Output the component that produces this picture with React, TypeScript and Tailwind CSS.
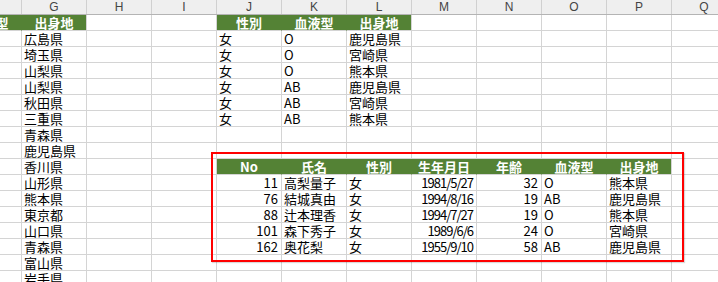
type Cell = { v?: string; h?: boolean; n?: boolean; d?: boolean };

const COLS = ["F", "G", "H", "I", "J", "K", "L", "M", "N", "O", "P", "Q"];

const prefs = [
  "広島県", "埼玉県", "山梨県", "山梨県", "秋田県", "三重県", "青森県", "鹿児島県",
  "香川県", "山形県", "熊本県", "東京都", "山口県", "青森県", "富山県", "岩手県",
];

const small = [
  ["女", "O", "鹿児島県"],
  ["女", "O", "宮崎県"],
  ["女", "O", "熊本県"],
  ["女", "AB", "鹿児島県"],
  ["女", "AB", "宮崎県"],
  ["女", "AB", "熊本県"],
];

const result = [
  ["11", "高梨量子", "女", "1981/5/27", "32", "O", "熊本県"],
  ["76", "結城真由", "女", "1994/8/16", "19", "AB", "鹿児島県"],
  ["88", "辻本理香", "女", "1994/7/27", "19", "O", "熊本県"],
  ["101", "森下秀子", "女", "1989/6/6", "24", "O", "宮崎県"],
  ["162", "奥花梨", "女", "1955/9/10", "58", "AB", "鹿児島県"],
];

const numCols = [0, 3, 4];

function buildRows(): Cell[][] {
  const rows: Cell[][] = [];
  for (let r = 0; r < 17; r++) rows.push(COLS.map(() => ({})));

  // green header cells
  const head = (r: number, c: number, v: string) => (rows[r][c] = { v, h: true });
  head(0, 0, "血液型");
  head(0, 1, "出身地");
  head(0, 4, "性別");
  head(0, 5, "血液型");
  head(0, 6, "出身地");

  prefs.forEach((p, i) => (rows[i + 1][1] = { v: p }));

  small.forEach((s, i) => {
    s.forEach((v, j) => (rows[i + 1][4 + j] = { v }));
  });

  ["No", "氏名", "性別", "生年月日", "年齢", "血液型", "出身地"].forEach((v, j) => head(9, 4 + j, v));

  result.forEach((s, i) => {
    s.forEach((v, j) => (rows[i + 10][4 + j] = { v, n: numCols.includes(j), d: j === 3 }));
  });

  return rows;
}

function SheetCell({ cell, next }: { cell: Cell; next?: Cell }) {
  if (cell.h) {
    return (
      <div
        className={`w-[65px] shrink-0 h-[16px] bg-[#548235] text-white font-bold text-center leading-[15px] whitespace-nowrap border-b border-b-[#d4d4d4] border-r ${
          next?.h ? "border-r-[#548235]" : "border-r-[#d4d4d4]"
        }`}
      >
        {cell.v}
      </div>
    );
  }
  return (
    <div
      className={`w-[65px] shrink-0 h-[16px] leading-[15px] whitespace-nowrap border-b border-r border-[#d4d4d4] text-black ${
        cell.n ? "text-right pr-[3px]" : "text-left pl-[2px]"
      } ${cell.d ? "tracking-[-1px]" : ""}`}
    >
      {cell.v}
    </div>
  );
}

export default function App() {
  const rows = buildRows();
  return (
    <div className="relative w-[718px] h-[282px] overflow-hidden bg-white">
      <div className="ml-[-43px] w-[780px] text-[13px] font-['Noto_Sans_CJK_JP',sans-serif]">
        <div className="flex h-[15px] bg-[#efefef] border-b border-[#b4b4b4]">
          {COLS.map((c) => (
            <div
              key={c}
              className="w-[65px] shrink-0 border-r border-[#d0d0d0] text-center text-[12px] leading-[14px] text-[#444] font-['Liberation_Sans',sans-serif]"
            >
              {c}
            </div>
          ))}
        </div>
        {rows.map((row, r) => (
          <div key={r} className="flex">
            {row.map((cell, c) => (
              <SheetCell key={c} cell={cell} next={row[c + 1]} />
            ))}
          </div>
        ))}
      </div>
      <div className="absolute left-[211px] top-[152px] w-[473px] h-[110px] border-2 border-[#ff0000] shadow-[1px_1px_1px_rgba(0,0,0,0.15)]" />
    </div>
  );
}
